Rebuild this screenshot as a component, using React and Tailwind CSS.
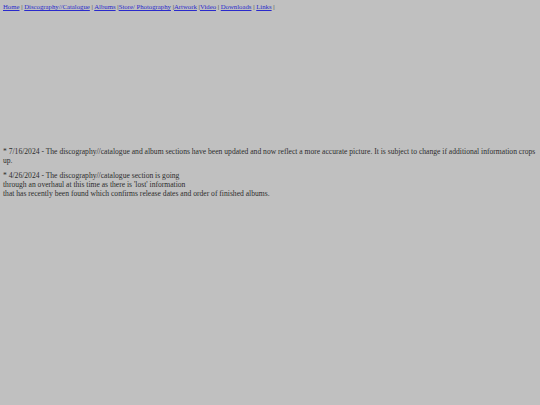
import React from "react";

const links = [
  { label: "Home", after: " | " },
  { label: "Discography//Catalogue", after: " | " },
  { label: "Albums", after: " |" },
  { label: "Store/ Photography", after: " |" },
  { label: "Artwork", after: " |" },
  { label: "Video", after: " | " },
  { label: "Downloads", after: " | " },
  { label: "Links", after: " |" },
];

export default function App() {
  return (
    <div className="min-h-[405px] w-full bg-[#c0c0c0] px-[3px] pt-[3px] font-['Liberation_Serif',serif] text-[7.6px] leading-[9px] text-[#2e2e2e]">
      <nav className="text-[6.75px] leading-[8px]">
        {links.map((l) => (
          <span key={l.label}>
            <a href="#" className="text-[#2a2acc] underline">
              {l.label}
            </a>
            {l.after}
          </span>
        ))}
      </nav>

      <div className="mt-[136px] flex flex-col gap-[6px]">
        <p>
          * 7/16/2024 - The discography//catalogue and album sections have been updated and now reflect a more
          accurate picture. It is subject to change if additional information crops up.
        </p>
        <p>
          * 4/26/2024 - The discography//catalogue section is going
          <br />
          through an overhaul at this time as there is 'lost' information
          <br />
          that has recently been found which confirms release dates and order of finished albums.
        </p>
      </div>
    </div>
  );
}
